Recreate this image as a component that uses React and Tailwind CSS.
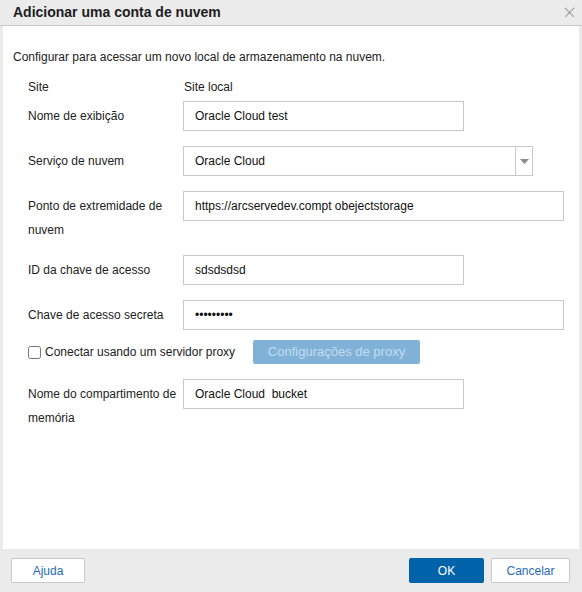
import React, { useState } from "react";

const labelFont = { fontFamily: '"Liberation Sans", Arial, sans-serif' };

const Row = ({ label, top, children }) => (
  <div className={`flex items-start ${top}`}>
    <div className="w-[177px] shrink-0 pl-[25px] pt-[3px] text-[12px] leading-6 text-[#222]">
      {label}
    </div>
    <div className="ml-[3px]">{children}</div>
  </div>
);

const TextBox = ({ value, width, type = "text" }) => (
  <input
    type={type}
    defaultValue={value}
    className={`h-[30px] ${width} border border-[#c9c9c9] bg-white px-[11px] text-[12px] text-[#111] outline-none`}
  />
);

export default function App() {
  const [proxy, setProxy] = useState(false);

  return (
    <div
      className="flex h-[592px] w-[582px] flex-col bg-[#ebebeb]"
      style={labelFont}
    >
      {/* title bar */}
      <div className="flex h-[26px] shrink-0 items-center justify-between border-b border-[#c9c9c9] pl-[13px] pr-[7px]">
        <span className="text-[14px] font-bold text-[#1d1d1d]">
          Adicionar uma conta de nuvem
        </span>
        <svg width="11" height="11" viewBox="0 0 11 11">
          <path
            d="M1 1 L10 10 M10 1 L1 10"
            stroke="#8a8a8a"
            strokeWidth="1.3"
            strokeDasharray="1.2 0.6"
          />
        </svg>
      </div>

      {/* body */}
      <div className="mx-[3px] flex-1 bg-white">
        <p className="pl-[10px] pt-[19px] text-[12px] leading-6 text-[#222]">
          Configurar para acessar um novo local de armazenamento na nuvem.
        </p>

        <div className="mt-[6px] flex text-[12px] leading-6 text-[#222]">
          <div className="w-[177px] pl-[25px]">Site</div>
          <div className="pl-[4px]">Site local</div>
        </div>

        <div className="flex flex-col">
          <Row label="Nome de exibição" top="mt-[2px]">
            <TextBox value="Oracle Cloud test" width="w-[281px]" />
          </Row>

          <Row label="Serviço de nuvem" top="mt-[15px]">
            <div className="flex h-[30px] w-[350px] border border-[#c9c9c9] bg-white">
              <div className="flex flex-1 items-center px-[11px] text-[12px] text-[#111]">
                Oracle Cloud
              </div>
              <div className="flex w-[17px] items-center justify-center border-l border-[#c9c9c9]">
                <svg width="9" height="5" viewBox="0 0 9 5">
                  <path d="M0 0 H9 L4.5 5 Z" fill="#8a8a8a" />
                </svg>
              </div>
            </div>
          </Row>

          <Row label={<>Ponto de extremidade de<br />nuvem</>} top="mt-[15px]">
            <TextBox
              value="https://arcservedev.compt obejectstorage"
              width="w-[381px]"
            />
          </Row>

          <Row label="ID da chave de acesso" top="mt-[13px]">
            <TextBox value="sdsdsdsd" width="w-[281px]" />
          </Row>

          <Row label="Chave de acesso secreta" top="mt-[15px]">
            <TextBox value="sdsdsdsds" type="password" width="w-[381px]" />
          </Row>

          <div className="mt-[10px] flex h-[24px] items-center">
            <label className="flex w-[250px] items-center pl-[25px] text-[12px] text-[#222]">
              <input
                type="checkbox"
                checked={proxy}
                onChange={(e) => setProxy(e.target.checked)}
                className="mr-[4px] h-[13px] w-[13px]"
              />
              Conectar usando um servidor proxy
            </label>
            <button
              disabled={!proxy}
              className="h-[24px] w-[167px] rounded-[2px] bg-[#80b2d8] text-[13px] text-[#c4dcef]"
            >
              Configurações de proxy
            </button>
          </div>

          <Row
            label={<>Nome do compartimento de<br />memória</>}
            top="mt-[15px]"
          >
            <TextBox value="Oracle Cloud  bucket" width="w-[281px]" />
          </Row>
        </div>
      </div>

      {/* footer */}
      <div className="flex h-[43px] shrink-0 items-center justify-between pl-[11px] pr-[12px]">
        <button className="h-[25px] w-[74px] rounded-[2px] border border-[#c9c9c9] bg-white text-[12px] text-[#1f6bb8]">
          Ajuda
        </button>
        <div className="flex gap-[7px]">
          <button className="h-[25px] w-[75px] rounded-[2px] bg-[#0063a9] text-[12px] text-white">
            OK
          </button>
          <button className="h-[25px] w-[79px] rounded-[2px] border border-[#c9c9c9] bg-white text-[12px] text-[#1f6bb8]">
            Cancelar
          </button>
        </div>
      </div>
    </div>
  );
}
